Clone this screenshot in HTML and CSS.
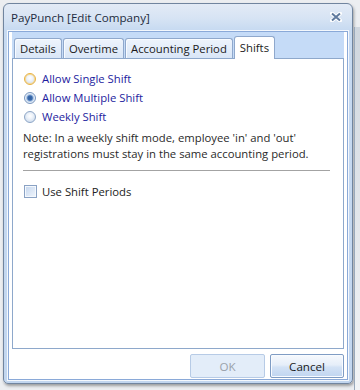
FILE: index.html
```html
<!DOCTYPE html>
<html lang="en">
<head>
  <meta charset="UTF-8" />
  <title>PayPunch [Edit Company]</title>
  <link rel="stylesheet" href="styles.css">
</head>
<body>

  <div class="desktop">
    <div class="window">
      <div class="titlebar">
        <span class="title">PayPunch [Edit Company]</span>
        <svg class="close" width="12" height="10" viewBox="0 0 12 10">
          <path d="M2 1.5 L10 8.5 M10 1.5 L2 8.5" stroke="#ffffff" stroke-width="4" stroke-linecap="round" />
          <path d="M2 1.5 L10 8.5 M10 1.5 L2 8.5" stroke="#5f7a9e" stroke-width="2" />
        </svg>
      </div>

      <div class="client">
        <div class="tabs">
          <div class="tab-strip">
            <div class="tab">Details</div>
            <div class="tab">Overtime</div>
            <div class="tab">Accounting Period</div>
            <div class="tab tab-active">Shifts</div>
          </div>

          <div class="tab-panel">
            <label class="option"><span class="radio radio-hover"></span>Allow Single Shift</label>
            <label class="option"><span class="radio radio-checked"></span>Allow Multiple Shift</label>
            <label class="option"><span class="radio"></span>Weekly Shift</label>

            <p class="note">Note: In a weekly shift mode, employee 'in' and 'out'<br>registrations must stay in the same accounting period.</p>

            <hr class="separator">

            <label class="check-row"><span class="checkbox"></span>Use Shift Periods</label>
          </div>
        </div>

        <div class="buttons">
          <button class="btn btn-ok" disabled>OK</button>
          <button class="btn btn-cancel">Cancel</button>
        </div>
      </div>
    </div>
    <div class="other-window"></div>
  </div>

</body>
</html>
```

FILE: styles.css
```css
body {
  margin: 0;
  background: #eceef1;
  font-family: 'Open Sans', sans-serif;
  font-size: 11.3px;
  color: #222;
}
.desktop {
  display: flex;
  height: 390px;
  box-sizing: border-box;
  padding: 3px 0 0 3px;
}
.window {
  width: 352px;
  height: 381px;
  box-sizing: border-box;
  display: flex;
  flex-direction: column;
  padding: 0 4px 3px 4px;
  border: 1px solid #71859f;
  border-radius: 6px 6px 5px 5px;
  background: linear-gradient(to bottom, #e3ebf6 0, #d7e4f4 14px, #c7daf1 26px, #c2d6ef 100%);
  box-shadow: 1px 2px 3px rgba(0,0,0,0.35);
}
.titlebar {
  height: 26px;
  flex: none;
  display: flex;
  align-items: center;
  justify-content: space-between;
  padding: 0 6px 1px 3px;
}
.title {
  color: #1e2c40;
  font-size: 11.6px;
}
.close {
  display: block;
}
.client {
  height: 350px;
  box-sizing: border-box;
  display: flex;
  flex-direction: column;
  padding: 0 3px;
  background: #fff;
  border: 1px solid #8aa9d8;
  box-shadow: 0 0 0 1px #f4f8fd;
}
.tabs {
  display: flex;
  flex-direction: column;
}
.tab-strip {
  height: 26px;
  display: flex;
  align-items: flex-end;
  gap: 1px;
  padding-left: 2px;
  background: #c5dbf7;
}
.tab {
  height: 20px;
  box-sizing: border-box;
  padding: 1px 5px 0 5px;
  border: 1px solid #8fa8cc;
  border-bottom: none;
  border-radius: 3px 3px 0 0;
  background: linear-gradient(to bottom, #eef4fc, #d9e6f7);
  box-shadow: inset 1px 1px 0 #f8fbff;
  color: #1a1a1a;
  line-height: 18px;
}
.tab-active {
  height: 23px;
  margin-bottom: -1px;
  position: relative;
  z-index: 1;
  background: #fff;
  box-shadow: none;
  line-height: 20px;
}
.tab-panel {
  height: 291px;
  box-sizing: border-box;
  padding: 10px 13px 0 10px;
  border: 1px solid #8ea8cb;
  background: #fff;
}
.option {
  height: 19px;
  display: flex;
  align-items: center;
  gap: 6px;
  color: #1d1d9e;
}
.radio {
  width: 12px;
  height: 12px;
  box-sizing: border-box;
  margin-left: 1px;
  border-radius: 50%;
  border: 1px solid #8ea6c6;
  background: radial-gradient(circle at 50% 40%, #ffffff 0, #eef3fa 35%, #d2dfef 75%);
}
.radio-hover {
  border-color: #eab240;
  box-shadow: inset 0 0 0 1px #f9dc95;
}
.radio-checked {
  border-color: #7b98c0;
  background: radial-gradient(circle, #2f5f9f 0, #3c6cae 2.2px, #a9c3e3 3.4px, #e8eff8 4.5px, #d2dfef 6px);
}
.note {
  margin: 4px 0 0 0;
  line-height: 16px;
  color: #2a2a2a;
}
.separator {
  margin: 8px 0 0 0;
  border: none;
  border-top: 1px solid #a3a3a3;
}
.check-row {
  height: 19px;
  margin-top: 11px;
  display: flex;
  align-items: center;
  gap: 5px;
}
.checkbox {
  width: 13px;
  height: 13px;
  box-sizing: border-box;
  margin-left: 1px;
  border: 1px solid #8aa2c4;
  background: linear-gradient(135deg, #c4d6ee, #f1f6fc);
  box-shadow: inset 0 0 0 1px #f4f8fd;
}
.buttons {
  display: flex;
  justify-content: flex-end;
  gap: 5px;
  padding-top: 5px;
}
.btn {
  height: 24px;
  box-sizing: border-box;
  font-family: 'Open Sans', sans-serif;
  font-size: 11.6px;
  border-radius: 2px;
  padding: 0;
}
.btn-ok {
  width: 75px;
  border: 1px solid #b7cbe6;
  background: #e3edf9;
  color: #9aa1aa;
}
.btn-cancel {
  width: 74px;
  border: 1px solid #7f9cc4;
  background: linear-gradient(to bottom, #f6f9fd 0, #e6eef9 45%, #d3e2f5 55%, #c0d5f0 100%);
  box-shadow: inset 0 0 0 1px #f8fbff;
  color: #1a1a1a;
}
.other-window {
  width: 5px;
  margin: 24px 0 0 1px;
  border-left: 1px solid #9aa9bb;
  background: linear-gradient(to bottom, #cfd6de, #f2f4f6);
}
```
